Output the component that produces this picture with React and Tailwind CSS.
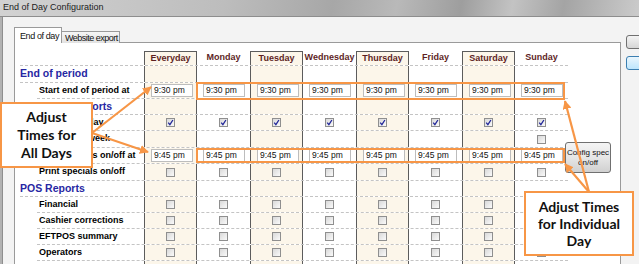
import React from 'react';

const days = ['Everyday', 'Monday', 'Tuesday', 'Wednesday', 'Thursday', 'Friday', 'Saturday', 'Sunday'];
const shaded = [true, false, true, false, true, false, true, false];

const rows = [
  { kind: 'section', label: 'End of period', h: 'h-[17px]' },
  { kind: 'time', label: 'Start end of period at', time: '9:30 pm', h: 'h-[16px]' },
  { kind: 'section', label: 'Scheduled reports', h: 'h-[16px]' },
  { kind: 'check', label: 'Print every day', checked: true, h: 'h-[16px]' },
  { kind: 'sunday', label: 'Print every week', h: 'h-[17px]' },
  { kind: 'time', label: 'Print specials on/off at', time: '9:45 pm', h: 'h-[16px]' },
  { kind: 'check', label: 'Print specials on/off', h: 'h-[17px]' },
  { kind: 'section', label: 'POS Reports', h: 'h-[16px]' },
  { kind: 'check', label: 'Financial', h: 'h-[16px]' },
  { kind: 'check', label: 'Cashier corrections', h: 'h-[16px]' },
  { kind: 'check', label: 'EFTPOS summary', h: 'h-[16px]' },
  { kind: 'check', label: 'Operators', h: 'h-[16px]' },
  { kind: 'empty', label: '', h: 'h-[16px]' },
];

const Box = ({ checked }) => (
  <span className="w-[9px] h-[9px] border border-[#8f8f8f] bg-gradient-to-br from-[#d9d9d9] to-[#fafafa] flex items-center justify-center">
    {checked && (
      <svg viewBox="0 0 7 7" className="w-[7px] h-[7px]">
        <path d="M1.2 3.6 L2.9 5.6 L5.9 1" stroke="#23289a" strokeWidth="1.3" fill="none" />
      </svg>
    )}
  </span>
);

const TimeBox = ({ value }) => (
  <div className="w-[42px] h-[13px] border border-[#bdbdbd] bg-white pl-[2px] text-[8.5px] leading-[11px] text-[#111]">
    {value}
  </div>
);

const DayCell = ({ i, header, children, start }) => (
  <div
    className={
      (shaded[i] ? 'bg-[#fcf6ea] border-x border-[#5c5c5c] ' : '') +
      (header && shaded[i] ? 'border-t ' : '') +
      (start ? 'justify-start pl-[6px] ' : 'justify-center ') +
      'w-[53px] shrink-0 flex items-center'
    }
  >
    {children}
  </div>
);

const Row = ({ row }) => {
  const section = row.kind === 'section';
  return (
    <div
      className={
        (section ? '' : 'ml-[17px] ') +
        row.h +
        ' flex border-b border-dashed border-[#c4c4c4]'
      }
    >
      <div
        className={
          section
            ? 'w-[124px] shrink-0 flex items-center text-[10.5px] font-bold text-[#2727a3]'
            : 'w-[107px] shrink-0 flex items-center pl-[2px] text-[9px] font-bold text-black'
        }
      >
        {row.label}
      </div>
      {days.map((d, i) => (
        <DayCell key={d} i={i} start={row.kind === 'time'}>
          {row.kind === 'time' && <TimeBox value={row.time} />}
          {row.kind === 'check' && <Box checked={row.checked} />}
          {row.kind === 'sunday' && i === 7 && <Box />}
        </DayCell>
      ))}
    </div>
  );
};

export default function App() {
  return (
    <div className="relative w-[639px] h-[264px] overflow-hidden bg-[#f3f3f3] font-['Liberation_Sans',Arial,sans-serif]">
      {/* title bar */}
      <div className="h-[17px] pl-[3px] pt-[2px] bg-[linear-gradient(100deg,#d2d2d2_0%,#bdbdbd_35%,#a7a7a7_52%,#b9b9b9_62%,#9e9e9e_72%,#c3c3c3_80%,#a4a4a4_88%,#cbcbcb_100%)] border-b border-[#8d8d8d] text-[9px] leading-[11px] text-[#1b1b1b]">
        End of Day Configuration
      </div>

      <div className="flex h-[247px]">
        <div className="w-[3px] bg-[#b2b2b2] border-r border-[#8e8e8e] shrink-0" />

        <div className="pl-[11px] pt-[10px] shrink-0">
          {/* tabs */}
          <div className="flex items-end h-[16px] relative z-10 -mb-px">
            <div className="w-[48px] h-[16px] bg-white border border-b-0 border-[#9a9a9a] pl-[5px] pt-[3px] text-[9px] leading-[10px] tracking-[-0.4px] text-[#111]">
              End of day
            </div>
            <div className="w-[58px] h-[12px] bg-gradient-to-b from-[#f6f6f6] to-[#e2e2e2] border border-l-0 border-b-0 border-[#9a9a9a] pl-[3px] pt-[1px] text-[9px] leading-[10px] tracking-[-0.5px] text-[#111]">
              Website export
            </div>
          </div>

          {/* panel */}
          <div className="w-[607px] h-[230px] bg-white border border-[#9a9a9a] pt-[8px] pl-[5px] flex">
            <div className="w-[548px] shrink-0">
              <div className="h-[15px] flex border-b border-dashed border-[#c4c4c4]">
                <div className="w-[124px] shrink-0" />
                {days.map((d, i) => (
                  <DayCell key={d} i={i} header>
                    <span className="text-[9px] font-bold text-[#5e1f1f]">{d}</span>
                  </DayCell>
                ))}
              </div>
              {rows.map((r, idx) => (
                <Row key={idx} row={r} />
              ))}
            </div>
            <div className="pt-[91px] -ml-[3px]">
              <div className="w-[46px] h-[31px] rounded-[3px] border border-[#707070] bg-gradient-to-b from-[#f4f4f4] via-[#e6e6e6] to-[#d0d0d0] flex flex-col items-center justify-center text-[8px] leading-[10px] text-[#111]">
                <span>Config spec</span>
                <span>on/off</span>
              </div>
            </div>
          </div>
        </div>

        <div className="pl-[5px] pt-[18px] flex flex-col gap-[7px]">
          <div className="w-[20px] h-[14px] rounded-[3px] border border-[#707070] bg-gradient-to-b from-[#f4f4f4] to-[#d6d6d6]" />
          <div className="w-[20px] h-[14px] rounded-[3px] border border-[#3c7fb1] bg-gradient-to-b from-[#eaf6fd] to-[#bee6fd]" />
        </div>
      </div>

      {/* highlight boxes */}
      <div className="absolute left-[196px] top-[82px] w-[369px] h-[18px] border-2 border-[#f79646]" />
      <div className="absolute left-[196px] top-[148px] w-[369px] h-[15px] border-2 border-[#f79646]" />

      {/* arrows */}
      <svg className="absolute left-0 top-0 w-[639px] h-[264px] pointer-events-none" viewBox="0 0 639 264">
        <defs>
          <marker id="ah" viewBox="0 0 10 10" refX="9" refY="5" markerWidth="9" markerHeight="9" markerUnits="userSpaceOnUse" orient="auto">
            <path d="M0 0 L10 5 L0 10 z" fill="#f79646" />
          </marker>
        </defs>
        <g stroke="#f79646" strokeWidth="2.2" fill="none" markerEnd="url(#ah)">
          <line x1="92" y1="133" x2="151" y2="87" />
          <line x1="92" y1="133" x2="148" y2="152" />
          <line x1="589" y1="192" x2="565" y2="101" />
          <line x1="589" y1="192" x2="565" y2="164" />
        </g>
      </svg>

      {/* callouts */}
      <div className="absolute left-0 top-[102px] w-[93px] h-[66px] bg-white border-2 border-[#f79646] flex items-center justify-center text-center font-['Lato',sans-serif] font-bold text-[14px] leading-[18px] text-[#111]">
        Adjust<br />Times for<br />All Days
      </div>
      <div className="absolute left-[524px] top-[191px] w-[110px] h-[65px] bg-white border-2 border-[#f79646] flex items-center justify-center text-center font-['Lato',sans-serif] font-bold text-[14px] leading-[17px] text-[#111]">
        Adjust Times<br />for Individual<br />Day
      </div>
    </div>
  );
}
